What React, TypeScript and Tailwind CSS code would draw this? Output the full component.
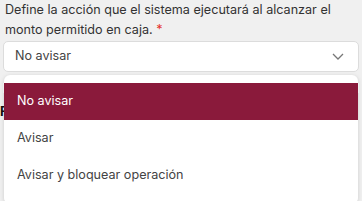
import React from 'react';

const options = ['No avisar', 'Avisar', 'Avisar y bloquear operación'];

const App: React.FC = () => {
  const selected = 'No avisar';

  return (
    <div
      className="relative w-[362px] h-[201px] overflow-hidden bg-[#f0f0f0]"
      style={{ fontFamily: 'Inter, "Noto Sans", sans-serif' }}
    >
      <div className="px-[3px]">
        <p className="pl-[2px] text-[12.6px] leading-[20px] text-[#333]">
          Define la acción que el sistema ejecutará al alcanzar el monto permitido en caja.{' '}
          <span className="text-[#e5322d]">*</span>
        </p>
        <div className="mt-[1px] flex h-[31px] items-center justify-between rounded-[5px] border border-[#dcdcdc] bg-white pl-[11px] pr-[14px]">
          <span className="text-[12.6px] text-[#444]">{selected}</span>
          <svg width="12" height="7" viewBox="0 0 12 7" fill="none">
            <path d="M1 1l5 5 5-5" stroke="#777" strokeWidth="1.3" />
          </svg>
        </div>
        {/* next field, mostly hidden behind the open menu */}
        <div className="mt-[11px] h-[10px] bg-white" />
        <div className="mt-[14px] -ml-[3px] text-[13px] font-bold leading-[8px] text-[#111]">F</div>
      </div>

      <div className="absolute left-[4px] top-[75px] w-[354px] rounded-t-[6px] rounded-b-[4px] bg-white py-2 shadow-[0_1px_4px_rgba(0,0,0,0.15)]">
        {options.map((opt) => (
          <div
            key={opt}
            className={`flex h-[37px] items-center px-[13px] text-[12.6px] ${
              opt === selected ? 'bg-[#8a1a3b] text-white' : 'text-[#444]'
            }`}
          >
            {opt}
          </div>
        ))}
      </div>
    </div>
  );
};

export default App;
